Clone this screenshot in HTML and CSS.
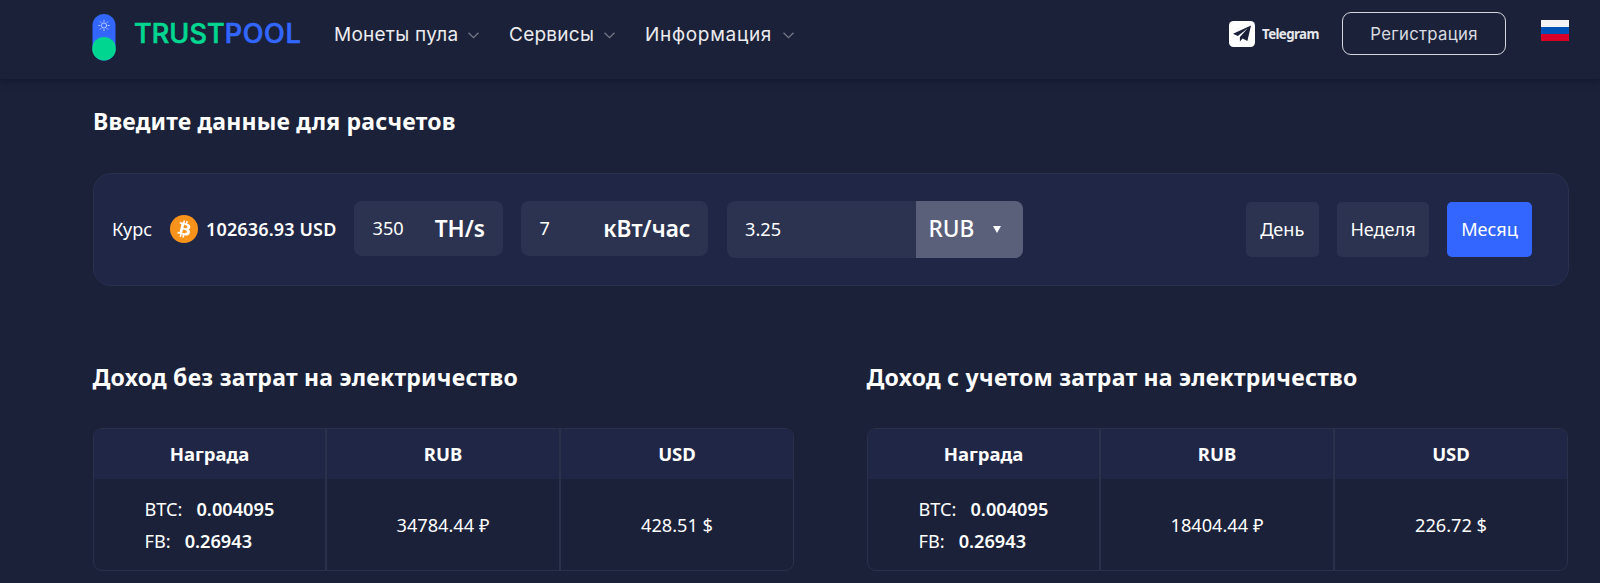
FILE: index.html
```html
<!DOCTYPE html>
<html lang="ru">
<head>
<meta charset="utf-8">
<title>Trustpool</title>
<link rel="stylesheet" href="styles.css">
</head>
<body>
<header class="header">
  <svg class="logo-mark" width="24" height="47" viewBox="0 0 24 47">
    <rect x=".5" width="23" height="46.5" rx="11.5" fill="#3366ff"/>
    <circle cx="12" cy="34.7" r="11.8" fill="#00d68f"/>
    <g fill="none" stroke="#c9d6ff" stroke-width=".9" stroke-linecap="round">
      <circle cx="12" cy="11.5" r="2.6"/>
      <path d="M12 6.3v1M12 15.7v1M6.8 11.5h1M16.2 11.5h1M8.3 7.8l.7.7M15 14.5l.7.7M15.7 7.8l-.7.7M9 14.5l-.7.7"/>
    </g>
  </svg>
  <div class="wordmark"><span class="word-trust">TRUST</span><span class="word-pool">POOL</span></div>
  <nav class="nav">
    <a class="nav-item nav-coins"><span class="nav-label">Монеты пула</span><svg class="chevron" viewBox="0 0 11 7"><path d="M.5 .7l5 5 5-5"/></svg></a>
    <a class="nav-item nav-services"><span class="nav-label">Сервисы</span><svg class="chevron" viewBox="0 0 11 7"><path d="M.5 .7l5 5 5-5"/></svg></a>
    <a class="nav-item nav-info"><span class="nav-label">Информация</span><svg class="chevron" viewBox="0 0 11 7"><path d="M.5 .7l5 5 5-5"/></svg></a>
  </nav>
  <a class="telegram">
    <svg width="26" height="26" viewBox="0 0 26 26"><rect width="26" height="26" rx="4.5" fill="#fff"/><path d="M22 4.5L4 12.8l4.8 2.2 9.7-7.6-7.6 8.5v4.7l2.7-3.2 4.8 2.5z" fill="#1a2138"/></svg>
    <span class="telegram-label">Telegram</span>
  </a>
  <a class="register"><span class="register-label">Регистрация</span></a>
  <svg class="flag" width="28" height="21" viewBox="0 0 28 21"><path fill="#f4f4f4" d="M0 0h28v7H0z"/><path fill="#0052b4" d="M0 7h28v7H0z"/><path fill="#d80027" d="M0 14h28v7H0z"/></svg>
</header>
<main class="main">
  <h2 class="title title-form"><span>Введите данные для расчетов</span></h2>
  <section class="panel">
    <span class="rate-label">Курс</span>
    <svg class="coin" width="28" height="28" viewBox="0 0 32 32"><circle cx="16" cy="16" r="16" fill="#f7931a"/><path fill="#fff" d="M23.189 14.02c.314-2.096-1.283-3.223-3.465-3.975l.708-2.84-1.728-.43-.69 2.765c-.454-.114-.92-.22-1.385-.326l.695-2.783L15.596 6l-.708 2.839c-.376-.086-.746-.17-1.104-.26l.002-.009-2.384-.595-.46 1.846s1.283.294 1.256.312c.7.175.826.638.805 1.006l-.806 3.235c.048.012.11.03.18.057l-.183-.045-1.13 4.532c-.086.212-.303.531-.793.41.018.025-1.256-.313-1.256-.313l-.858 1.978 2.25.561c.418.105.828.215 1.231.318l-.715 2.872 1.727.43.708-2.84c.472.127.93.245 1.378.357l-.706 2.828 1.728.43.715-2.866c2.948.558 5.164.333 6.097-2.333.752-2.146-.037-3.385-1.588-4.192 1.13-.26 1.98-1.003 2.207-2.538zm-3.95 5.538c-.533 2.147-4.148.986-5.32.695l.95-3.805c1.172.293 4.929.872 4.37 3.11zm.535-5.569c-.487 1.953-3.495.96-4.47.717l.86-3.45c.975.243 4.118.696 3.61 2.733z"/></svg>
    <strong class="rate">102636.93 USD</strong>
    <div class="field field-hash"><span>350</span><span class="unit">TH/s</span></div>
    <div class="field field-power"><span>7</span><span class="unit">кВт/час</span></div>
    <div class="field field-price"><span>3.25</span><div class="select"><span class="select-label">RUB</span><svg width="8" height="7" viewBox="0 0 8 7"><path d="M0 0h8L4 7z" fill="#fff"/></svg></div></div>
    <div class="periods">
      <span class="period period-day">День</span>
      <span class="period period-week">Неделя</span>
      <span class="period period-month">Месяц</span>
    </div>
  </section>
  <div class="results">
    <section class="result">
      <h2 class="title title-result"><span>Доход без затрат на электричество</span></h2>
      <div class="table">
        <div class="column"><div class="head">Награда</div><div class="cell rewards"><div class="reward">BTC:<b>0.004095</b></div><div class="reward">FB:<b>0.26943</b></div></div></div>
        <div class="column"><div class="head">RUB</div><div class="cell">34784.44 ₽</div></div>
        <div class="column"><div class="head">USD</div><div class="cell">428.51 $</div></div>
      </div>
    </section>
    <section class="result">
      <h2 class="title title-result"><span>Доход с учетом затрат на электричество</span></h2>
      <div class="table">
        <div class="column"><div class="head">Награда</div><div class="cell rewards"><div class="reward">BTC:<b>0.004095</b></div><div class="reward">FB:<b>0.26943</b></div></div></div>
        <div class="column"><div class="head">RUB</div><div class="cell">18404.44 ₽</div></div>
        <div class="column"><div class="head">USD</div><div class="cell">226.72 $</div></div>
      </div>
    </section>
  </div>
</main>
</body>
</html>
```

FILE: styles.css
```css
* { box-sizing: border-box; }
body { margin: 0; height: 583px; overflow: hidden; background: #1a2138; color: #fff; font: 18.2px/26px "Noto Sans", "Open Sans", sans-serif; white-space: nowrap; }
.header { height: 79px; display: flex; align-items: flex-start; padding: 0 31px 0 92px; box-shadow: 0 2px 6px rgba(12, 16, 32, .5); }
.logo-mark { margin-top: 13.5px; flex: none; }
.wordmark { margin: 18px 0 0 18px; width: 200px; font: 500 27px/32px "Inter", sans-serif; flex: none; -webkit-text-stroke: .7px currentColor; stroke-linejoin: round; }
.word-trust { color: #00d68f; letter-spacing: .1px; }
.word-pool { color: #3366ff; letter-spacing: .7px; }
.nav { display: flex; }
.nav-item { display: flex; align-items: center; height: 70px; color: #ececef; font: 400 19px/26px "Inter", sans-serif; }
.nav-label { flex: 1; }
.nav-coins { width: 145px; letter-spacing: .25px; }
.nav-services { width: 106px; margin-left: 30px; letter-spacing: .25px; }
.nav-info { width: 149px; margin-left: 30px; letter-spacing: .7px; }
.chevron { width: 11px; height: 7px; flex: none; fill: none; stroke: #747987; stroke-width: 1.3; }
.telegram { margin: 21px 0 0 auto; width: 91px; display: flex; gap: 7px; align-items: center; }
.telegram svg { flex: none; }
.telegram-label { font: 700 13.3px/26px "Noto Sans", sans-serif; color: #e6e7ec; letter-spacing: -.6px; }
.register { margin: 12px 0 0 22px; width: 164px; height: 43px; border: 1.5px solid #d6d7dc; border-radius: 9px; display: flex; align-items: center; justify-content: center; font: 400 16.7px/24px "Inter", sans-serif; color: #d9dbe1; letter-spacing: .3px; }
.flag { margin: 19.5px 0 0 35px; flex: none; }
.main { padding: 26px 31px 0 93px; }
.title { margin: 0; font-weight: 700; font-size: 23px; line-height: 32px; }
.title-form { letter-spacing: .18px; }
.title-result { letter-spacing: .24px; margin-left: -.5px; }
.panel { height: 113px; margin-top: 36px; border: 1px solid #29314f; border-radius: 18px; background: #202645; padding: 27px 36px 0 18px; display: flex; align-items: flex-start; }
.rate-label, .rate { line-height: 56px; font-size: 18px; }
.rate-label { width: 58px; }
.rate { font-weight: 600; width: 148px; margin-left: 8px; letter-spacing: .15px; }
.coin { margin-top: 14px; flex: none; }
.field { flex: none; height: 55px; border-radius: 8px; background: #2b3350; padding-left: 18.5px; display: flex; align-items: center; justify-content: space-between; font-size: 18.2px; }
.field > span:first-child { padding-bottom: 1px; }
.field-hash { width: 149px; padding-right: 18px; }
.field-power { width: 187px; margin-left: 18px; padding-right: 17.5px; }
.field-price { width: 296.5px; height: 56.5px; margin-left: 18.5px; }
.unit { font-weight: 600; font-size: 22.7px; }
.select { width: 107px; height: 100%; border-radius: 0 8px 8px 0; background: #5a607a; display: flex; align-items: center; justify-content: space-between; padding: 0 22px 0 12.5px; font-size: 22.7px; font-weight: 500; }
.periods { display: flex; gap: 18px; margin: 1px 0 0 auto; }
.period { height: 55px; line-height: 55px; border-radius: 5px; background: #2b3350; text-align: center; font-size: 18.1px; }
.period-day { width: 73.5px; }
.period-week { width: 92px; }
.period-month { width: 85px; background: #3366ff; }
.results { display: flex; gap: 73px; margin-top: 75px; }
.result { width: 701px; }
.table { margin-top: 35px; height: 143px; border: 1px solid #29314b; border-radius: 9px; overflow: hidden; display: grid; grid-template-columns: 231px 234px 1fr; }
.column + .column { border-left: 2px solid #29314b; }
.head { height: 50px; background: #202645; display: flex; align-items: center; justify-content: center; font-weight: 700; font-size: 18.5px; }
.cell { height: 91px; display: flex; align-items: center; justify-content: center; font-size: 18.2px; }
.rewards { flex-direction: column; align-items: flex-start; padding: 1px 0 0 50.5px; }
.reward { line-height: 32px; }
.reward b { margin-left: 14px; font-weight: 600; }
```
